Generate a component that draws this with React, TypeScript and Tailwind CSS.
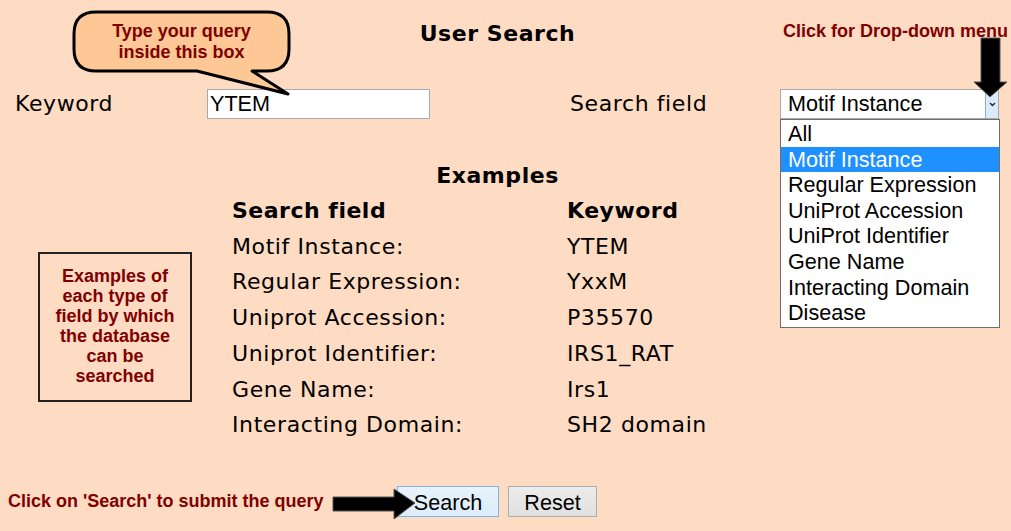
import React from "react";

const rows: [string, string][] = [
  ["Motif Instance:", "YTEM"],
  ["Regular Expression:", "YxxM"],
  ["Uniprot Accession:", "P35570"],
  ["Uniprot Identifier:", "IRS1_RAT"],
  ["Gene Name:", "Irs1"],
  ["Interacting Domain:", "SH2 domain"],
];

const options = [
  "All",
  "Motif Instance",
  "Regular Expression",
  "UniProt Accession",
  "UniProt Identifier",
  "Gene Name",
  "Interacting Domain",
  "Disease",
];

export default function App() {
  return (
    <div className="relative w-[1011px] h-[531px] overflow-hidden bg-[#fedbc3] text-black font-['DejaVu_Sans',Verdana,sans-serif]">
      <h1 className="pt-[20px] pr-[16px] text-center text-[22px] font-bold leading-[28px] tracking-[0.55px]">User Search</h1>

      <div className="mt-[41px] flex h-[30px] items-center">
        <span className="w-[207px] pl-[15px] text-[22px] leading-[30px] tracking-[0.6px]">Keyword</span>
        <div className="flex h-[30px] w-[223px] items-center border border-[#a9a9a9] bg-white pl-[2px] font-['Liberation_Sans',Arial,sans-serif] text-[21.6px]">
          YTEM
        </div>
        <span className="ml-[140px] w-[210px] text-[22px] leading-[30px] tracking-[0.6px]">Search field</span>
        <div className="flex h-[30px] w-[219px] items-stretch border border-[#a9a9a9] bg-white font-['Liberation_Sans',Arial,sans-serif] text-[21.6px]">
          <span className="flex flex-1 items-center pl-[7px]">Motif Instance</span>
          <span className="flex w-[13px] items-center justify-center border-l border-[#7eb4ea] bg-[#dcebfb]">
            <svg width="7" height="5" viewBox="0 0 7 5">
              <path d="M1 1 L3.5 3.5 L6 1" stroke="#222" strokeWidth="1.4" fill="none" />
            </svg>
          </span>
        </div>
      </div>

      <h2 className="mt-[43px] pr-[16px] text-center text-[22px] font-bold leading-[28px] tracking-[0.55px]">Examples</h2>

      <div className="ml-[232px] mt-[3px] grid grid-cols-[335px_auto] text-[22px] leading-[35.7px] tracking-[0.6px]">
        <span className="font-bold tracking-[0.5px]">Search field</span>
        <span className="font-bold tracking-[0.5px]">Keyword</span>
        {rows.map(([a, b]) => (
          <React.Fragment key={a}>
            <span>{a}</span>
            <span>{b}</span>
          </React.Fragment>
        ))}
      </div>

      <div className="mt-[43px] flex h-[31px] items-center font-['Liberation_Sans',Arial,sans-serif]">
        <span className="w-[397px] pl-[8px] text-[18px] font-bold text-[#800000]">
          Click on 'Search' to submit the query
        </span>
        <button className="h-[31px] w-[102px] border border-[#7eb4ea] bg-gradient-to-b from-[#e8f3fc] to-[#dbecfb] text-[21.6px] text-black">
          Search
        </button>
        <button className="ml-[9px] h-[31px] w-[89px] border border-[#adadad] bg-gradient-to-b from-[#ececec] to-[#e0e0e0] text-[21.6px] text-black">
          Reset
        </button>
      </div>

      {/* callout bubble */}
      <svg className="absolute left-0 top-0" width="300" height="100" viewBox="0 0 300 100">
        <path
          d="M96 12 L267 12 Q289 12 289 34 L289 49 Q289 71 267 71 L252 71 L288 94 L197 71 L96 71 Q74 71 74 49 L74 34 Q74 12 96 12 Z"
          fill="#fdc895"
          stroke="#000"
          strokeWidth="3"
          strokeLinejoin="round"
        />
      </svg>
      <div className="absolute left-[74px] top-[21px] w-[215px] text-center font-['Liberation_Sans',Arial,sans-serif] text-[18px] font-bold leading-[21px] text-[#800000]">
        Type your query
        <br />
        inside this box
      </div>

      {/* drop-down note */}
      <div className="absolute left-[783px] top-[20px] font-['Liberation_Sans',Arial,sans-serif] text-[18px] font-bold leading-[22px] text-[#800000]">
        Click for Drop-down menu
      </div>
      <svg className="absolute left-[970px] top-[36px]" width="41" height="64" viewBox="970 36 41 64">
        <polygon
          points="981,38 1000,38 1000,82 1007,82 990,97 974,82 981,82"
          fill="#000"
          stroke="#555"
          strokeWidth="1"
        />
      </svg>

      {/* dropdown list */}
      <div className="absolute left-[780px] top-[119px] w-[220px] border border-[#6f6f6f] bg-white pt-[1px] pb-[1px] font-['Liberation_Sans',Arial,sans-serif] text-[21.6px]">
        {options.map((o, i) => (
          <div
            key={o}
            className={
              i === 1
                ? "h-[25.6px] bg-[#1e90ff] pl-[7px] leading-[25.6px] text-white"
                : "h-[25.6px] pl-[7px] leading-[25.6px] text-black"
            }
          >
            {o}
          </div>
        ))}
      </div>

      {/* left explanatory box */}
      <div className="absolute left-[38px] top-[252px] flex h-[150px] w-[154px] items-start justify-center border-2 border-[#222] pt-[12px] text-center font-['Liberation_Sans',Arial,sans-serif] text-[18px] font-bold leading-[20px] text-[#800000]">
        <div>
          Examples of
          <br />
          each type of
          <br />
          field by which
          <br />
          the database
          <br />
          can be
          <br />
          searched
        </div>
      </div>

      {/* bottom arrow */}
      <svg className="absolute left-[330px] top-[484px]" width="90" height="40" viewBox="330 484 90 40">
        <polygon
          points="333,497 394,497 394,489 415,503 394,519 394,511 333,511"
          fill="#000"
          stroke="#555"
          strokeWidth="1"
        />
      </svg>
    </div>
  );
}
